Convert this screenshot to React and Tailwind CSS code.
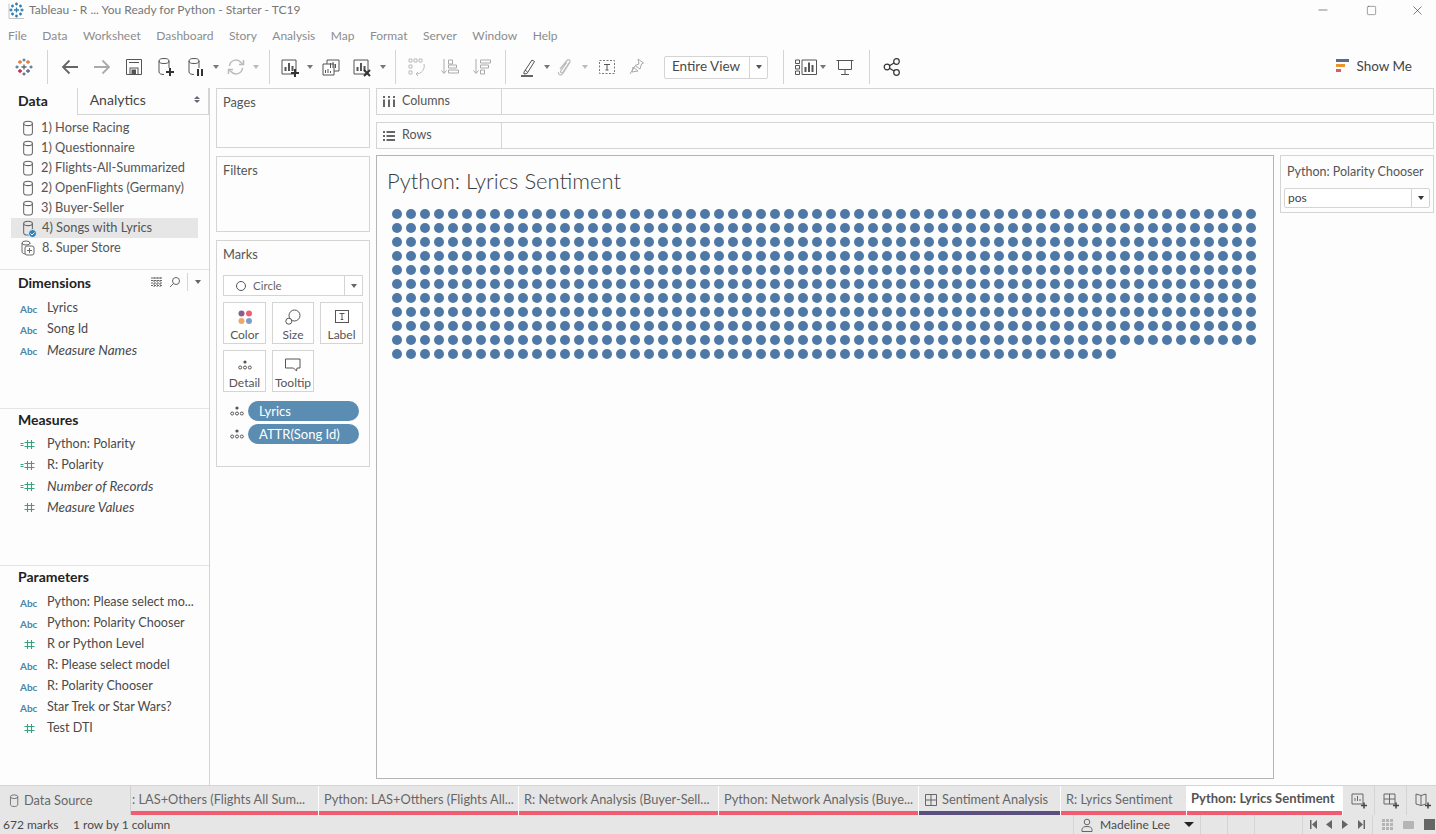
import React from 'react';
import { Minus, Square, X } from 'lucide-react';

const font = { fontFamily: 'Lato, sans-serif' };

function Svg({ children, w = 20, h = 20, className = 'text-[#555]', sw = 1.2 }) {
  return (
    <svg width={w} height={h} viewBox={`0 0 ${w} ${h}`} fill="none" stroke="currentColor" strokeWidth={sw} className={className}>
      {children}
    </svg>
  );
}

function Caret({ className = 'border-t-[#777]' }) {
  return <span className={`block w-0 h-0 border-l-[3.5px] border-r-[3.5px] border-t-[4px] border-l-transparent border-r-transparent shrink-0 ${className}`} />;
}

function Sep({ className = '' }) {
  return <div className={`w-px h-[34px] bg-[#d4d4d4] shrink-0 ${className}`} />;
}

function Slot({ className, children }) {
  return <div className={`h-[34px] flex items-center justify-center shrink-0 ${className}`}>{children}</div>;
}

function Cylinder({ className = 'text-[#666]', w = 14, h = 18 }) {
  return (
    <svg width={w} height={h} viewBox="0 0 14 18" fill="none" stroke="currentColor" strokeWidth="1.1" className={className}>
      <ellipse cx="6.5" cy="3.5" rx="4.7" ry="2.4" />
      <path d="M1.8 3.5v10c0 1.6 2 2.6 4.7 2.6s4.7-1 4.7-2.6v-10" />
    </svg>
  );
}

function TableauLogo() {
  const c = (x, y, col, s = 5) => (
    <path d={`M${x - s / 2} ${y}h${s}M${x} ${y - s / 2}v${s}`} stroke={col} strokeWidth="1.3" />
  );
  return (
    <svg width="18" height="18" viewBox="0 0 18 18" fill="none">
      {c(9, 9, '#666', 5)}
      {c(5, 4, '#e8762b', 4)}
      {c(13, 4, '#e8762b', 4)}
      {c(9, 2, '#5a7fa8', 3)}
      {c(2, 9, '#4e79a7', 3)}
      {c(16, 9, '#4e79a7', 3)}
      {c(5, 13, '#c72037', 4)}
      {c(13, 13, '#5b6591', 4)}
      {c(9, 16, '#5a6b91', 3)}
    </svg>
  );
}

function WindowLogo() {
  const c = (x, y, s = 4) => <path d={`M${x - s / 2} ${y}h${s}M${x} ${y - s / 2}v${s}`} stroke="#2f7fb5" strokeWidth="1.3" />;
  return (
    <svg width="17" height="17" viewBox="0 0 17 17" fill="none">
      <path d="M1 1.5v15h15" stroke="#c4c4c4" />
      {c(8.5, 8, 5)}
      {c(8.5, 2, 3)}
      {c(8.5, 14, 3)}
      {c(3, 8, 3)}
      {c(14, 8, 3)}
      {c(4.5, 4, 3)}
      {c(12.5, 4, 3)}
      {c(4.5, 12, 3)}
      {c(12.5, 12, 3)}
    </svg>
  );
}

function PlusBadge({ x, y }) {
  return <path d={`M${x - 4} ${y}h8M${x} ${y - 4}v8`} stroke="#333" strokeWidth="2" />;
}

function Toolbar() {
  return (
    <div className="h-[34px] flex items-center pl-[8px] shrink-0">
      <Slot className="w-[32px]"><TableauLogo /></Slot>
      <div className="w-[7px] shrink-0" />
      <Sep />
      <div className="w-[6px] shrink-0" />
      <Slot className="w-[32px]">
        <Svg><path d="M18 10H3M9.5 3.5 3 10l6.500 6.500" stroke="#666" strokeWidth="1.800" /></Svg>
      </Slot>
      <Slot className="w-[32px]">
        <Svg className="text-[#aaa]"><path d="M2 10h15M10.500 3.500 17 10l-6.500 6.500" strokeWidth="1.800" /></Svg>
      </Slot>
      <Slot className="w-[32px]">
        <Svg sw={1}>
          <path d="M2.500 2.500h15v15h-15zM5 5.500h10" />
          <rect x="6" y="11" width="8" height="6.500" />
          <rect x="8" y="13" width="3.500" height="4.500" fill="#555" />
        </Svg>
      </Slot>
      <Slot className="w-[32px]">
        <Svg sw={1}><ellipse cx="8" cy="4" rx="5" ry="2.500" /><path d="M3 4v11c0 1.500 2 2.500 5 2.500M13 4v7" /><PlusBadge x={14} y={15} /></Svg>
      </Slot>
      <Slot className="w-[28px]">
        <Svg sw={1}><ellipse cx="8" cy="4" rx="5" ry="2.500" /><path d="M3 4v11c0 1.500 2 2.500 5 2.500M13 4v7" /><path d="M12 12v7M16 12v7" stroke="#333" strokeWidth="2" /></Svg>
      </Slot>
      <Slot className="w-[12px]"><Caret /></Slot>
      <Slot className="w-[28px]">
        <Svg className="text-[#bbb]" sw={1.500}><path d="M3.500 9A6.500 6.500 0 0 1 15 5.500L17 7M16.500 11A6.500 6.500 0 0 1 5 14.500L3 13" /><path d="M17.500 3v4.500H13M2.500 17v-4.500H7" /></Svg>
      </Slot>
      <Slot className="w-[12px]"><Caret className="border-t-[#bbb]" /></Slot>
      <div className="w-[7px] shrink-0" />
      <Sep />
      <div className="w-[6px] shrink-0" />
      <Slot className="w-[28px]">
        <Svg sw={1}><path d="M2 3h14v14H2z" /><path d="M5.500 14V10M9 14V6M12.500 14V9" strokeWidth="2" /><PlusBadge x={15} y={16} /></Svg>
      </Slot>
      <Slot className="w-[12px]"><Caret /></Slot>
      <Slot className="w-[30px]">
        <Svg sw={1}><path d="M6 3h12v11H6z" fill="#fff" /><path d="M2 7h11v11H2z" fill="#fff" /><path d="M9.500 11V6M12 11V5M14.500 11V7M4.500 16v-3M7 16v-4M9.500 16v-2" /></Svg>
      </Slot>
      <Slot className="w-[32px]">
        <Svg sw={1}><path d="M2 3h14v14H2z" /><path d="M5.500 14V10M9 14V6M12.500 14V9" strokeWidth="2" /><path d="M12 13l6 6M18 13l-6 6" stroke="#333" strokeWidth="2" /></Svg>
      </Slot>
      <Slot className="w-[10px]"><Caret /></Slot>
      <div className="w-[7px] shrink-0" />
      <Sep />
      <div className="w-[6px] shrink-0" />
      <Slot className="w-[30px]">
        <Svg className="text-[#bbb]" sw={1}><path d="M2 2h3v3H2zM7 2h3v3H7zM12 2h3v3h-3zM2 8h3v3H2zM2 14h3v3H2z" /><path d="M17 7a8 8 0 0 1-8 10M9 17l2-2M9 17l2 2" /></Svg>
      </Slot>
      <div className="w-[2px] shrink-0" />
      <Slot className="w-[32px]">
        <Svg className="text-[#aaa]" sw={1}><path d="M4 2v14M1.500 13.500 4 16.500l2.500-3M8.500 3h4v4h-4zM8.500 8h8v3h-8zM8.500 13h10v3h-10z" /></Svg>
      </Slot>
      <Slot className="w-[32px]">
        <Svg className="text-[#aaa]" sw={1}><path d="M4 2v14M1.500 13.500 4 16.500l2.500-3M8.500 3h10v3h-10zM8.500 8h8v3h-8zM8.500 13h4v4h-4z" /></Svg>
      </Slot>
      <div className="w-[7px] shrink-0" />
      <Sep />
      <div className="w-[6px] shrink-0" />
      <Slot className="w-[32px]">
        <Svg sw={1}><path d="M6 15 14 3l2.500 1.500L9 16.500 6 17zM7 13l2.500 2" /><path d="M3 19h12" stroke="#555" strokeWidth="1.800" /></Svg>
      </Slot>
      <Slot className="w-[6px]"><Caret /></Slot>
      <Slot className="w-[30px]">
        <Svg className="text-[#bbb]"><path d="M5 12 12 3.500c1.500-1.800 4-.3 2.800 1.700L8 15c-1 1.500-3 .5-2.300-1l6-8.500" /><path d="M14.800 5.500 7.500 17c-1.500 2-5 .5-3.800-2" /></Svg>
      </Slot>
      <Slot className="w-[10px]"><Caret className="border-t-[#bbb]" /></Slot>
      <Slot className="w-[34px]">
        <Svg sw={1}>
          <rect x="2.500" y="3.500" width="15" height="13" strokeDasharray="2 1.500" stroke="#777" />
          <path d="M7 7.500h6M10 7.500v5.500M8.500 13h3" stroke="#555" />
        </Svg>
      </Slot>
      <Slot className="w-[26px]">
        <Svg className="text-[#aaa]" sw={1}><path d="M11 2l5.500 4-2 1-1.500 5-5-3.500 4-1.500zM8 9l-5 8" /><path d="M6 10l5 4-6 1z" /></Svg>
      </Slot>
      <div className="w-[14px] shrink-0" />
      <div className="w-[104px] h-[23px] border border-[#d4d4d4] rounded-[2px] flex items-center shrink-0 bg-white">
        <span className="flex-1 text-[13.500px] text-[#4a4a4a] pl-[7px] leading-none">Entire View</span>
        <div className="w-[18px] h-full border-l border-[#d4d4d4] flex items-center justify-center"><Caret className="border-t-[#555]" /></div>
      </div>
      <div className="w-[15px] shrink-0" />
      <Sep />
      <div className="w-[6px] shrink-0" />
      <Slot className="w-[32px]">
        <svg width="22" height="16" viewBox="0 0 22 16" fill="none" stroke="#555">
          <path d="M.5 1h4v3.500h-4zM.5 6.500h4V10h-4zM.5 12h4v3.500h-4zM7 1h14.500v14.500H7z" />
          <path d="M10.500 13V8M14 13V3.500M17.500 13V6" strokeWidth="2" />
        </svg>
      </Slot>
      <Slot className="w-[2px]"><Caret /></Slot>
      <Slot className="w-[42px]">
        <Svg sw={1}><path d="M1.500 3.500h17M3.500 3.500v9h13v-9M10 12.500V17M6 17.500h8" /></Svg>
      </Slot>
      <div className="w-[3px] shrink-0" />
      <Sep />
      <div className="w-[6px] shrink-0" />
      <Slot className="w-[32px]">
        <Svg sw={1.200} className="text-[#333]"><circle cx="5" cy="10" r="2.800" /><circle cx="14.500" cy="4.500" r="2.800" /><circle cx="14.500" cy="15.500" r="2.800" /><path d="M7.500 8.700l4.500-2.800M7.500 11.300l4.500 2.800" /></Svg>
      </Slot>
      <div className="flex-1" />
      <div className="flex items-center gap-[6px] pr-[24px] pb-[2px] shrink-0">
        <svg width="14" height="16" viewBox="0 0 14 16">
          <rect x="0" y="1" width="13" height="3" fill="#5a6b91" />
          <rect x="0" y="6" width="9" height="3" fill="#e8962b" />
          <rect x="0" y="11" width="5" height="3" fill="#e0586c" />
        </svg>
        <span className="text-[13.500px] text-[#444]">Show Me</span>
      </div>
    </div>
  );
}

function DataIcon({ type }) {
  if (type === 'abc') return <span className="text-[10px] font-bold text-[#4a86a8] leading-none w-[17px] text-center">Abc</span>;
  return (
    <svg width="17" height="11" viewBox="0 0 17 11" fill="none" stroke="#37a27f" strokeWidth="1.100">
      {type === 'calc' && <path d="M.500 4.500h3M.500 6.500h3" />}
      <path d="M7.500 1v9M11.500 1v9M4.500 3.500h10M4.500 7.500h10" />
    </svg>
  );
}

function FieldList({ items }) {
  return (
    <div className="flex flex-col">
      {items.map(([type, name, italic]) => (
        <div key={name} className="h-[21px] flex items-center pl-[20px] shrink-0">
          <DataIcon type={type} />
          <span className={`ml-[10px] text-[#4a4a4a] whitespace-nowrap ${italic ? 'italic text-[13.500px]' : 'text-[12.600px]'}`}>{name}</span>
        </div>
      ))}
    </div>
  );
}

const sources = ['1) Horse Racing', '1) Questionnaire', '2) Flights-All-Summarized', '2) OpenFlights (Germany)', '3) Buyer-Seller', '4) Songs with Lyrics', '8. Super Store'];

function Sidebar() {
  return (
    <div className="w-[210px] shrink-0 border-r border-[#d4d4d4] flex flex-col">
      <div className="h-[27px] flex shrink-0">
        <div className="w-[77px] pl-[18px] pb-[3px] flex items-center text-[14px] font-bold text-[#222]">Data</div>
        <div className="w-[133px] border-l border-b border-r border-[#d4d4d4] pl-[12px] pr-[8px] pb-[3px] flex items-center justify-between text-[14px] text-[#444]">
          Analytics
          <span className="flex flex-col gap-px">
            <span className="block w-0 h-0 border-l-[3px] border-r-[3px] border-b-[3px] border-l-transparent border-r-transparent border-b-[#667]" />
            <span className="block w-0 h-0 border-l-[3px] border-r-[3px] border-t-[3px] border-l-transparent border-r-transparent border-t-[#667]" />
          </span>
        </div>
      </div>
      <div className="h-[155px] border-b border-[#e5e5e5] pt-[3px] pl-[11px] pr-[11px] shrink-0">
        {sources.map((s, i) => (
          <div key={s} className={`h-[20px] flex items-center pl-[11px] ${i === 5 ? 'bg-[#e6e6e6]' : ''}`}>
            <div className="relative w-[19px] shrink-0">
              {i === 6 ? (
                <svg width="16" height="16" viewBox="0 0 16 16" fill="none" stroke="#666" className="-ml-[2px]">
                  <ellipse cx="6" cy="3" rx="4" ry="2" />
                  <path d="M2 3v9c0 1 2 2 4 2M10 3v1" />
                  <rect x="5" y="6" width="9" height="9" rx="2" fill="#fdfdfd" />
                  <path d="M9.500 8v5M7 10.500h5" />
                </svg>
              ) : (
                <Cylinder w={13} h={17} />
              )}
              {i === 5 && (
                <svg width="9" height="9" viewBox="0 0 9 9" className="absolute left-[6px] top-[9px]">
                  <circle cx="4.500" cy="4.500" r="4" fill="#2f82b5" stroke="#fff" strokeWidth="0.800" />
                  <path d="M2.500 4.500l1.500 1.500 2.500-2.500" fill="none" stroke="#fff" strokeWidth="1" />
                </svg>
              )}
            </div>
            <span className={`text-[12.800px] text-[#555] whitespace-nowrap ${i >= 5 ? 'ml-[1px]' : ''}`}>{s}</span>
          </div>
        ))}
      </div>
      <div className="h-[139px] border-b border-[#e5e5e5] shrink-0">
        <div className="h-[26px] pb-[2px] flex items-center pl-[18px] pr-[8px] mb-[2px]">
          <span className="text-[14px] font-bold text-[#222] flex-1">Dimensions</span>
          <svg width="12" height="10" viewBox="0 0 12 10" stroke="#666" fill="none" className="mr-[6px]"><path d="M0 1h12M0 3.500h12M0 6h12M0 8.500h12M3 0v10M6 0v10M9 0v10" strokeDasharray="2 1" /></svg>
          <svg width="12" height="12" viewBox="0 0 12 12" stroke="#666" fill="none" className="mr-[6px]"><circle cx="7" cy="5" r="3.500" /><path d="M4.500 7.500 1 11" /></svg>
          <div className="w-px h-[18px] bg-[#d4d4d4] mr-[7px]" />
          <Caret className="border-t-[#666]" />
        </div>
        <FieldList items={[['abc', 'Lyrics'], ['abc', 'Song Id'], ['abc', 'Measure Names', true]]} />
      </div>
      <div className="h-[157px] border-b border-[#e5e5e5] shrink-0">
        <div className="h-[25px] pb-[5px] flex items-center pl-[18px] text-[14px] font-bold text-[#222]">Measures</div>
        <FieldList items={[['calc', 'Python: Polarity'], ['calc', 'R: Polarity'], ['calc', 'Number of Records', true], ['num', 'Measure Values', true]]} />
      </div>
      <div>
        <div className="h-[26px] pb-[5px] flex items-center pl-[18px] text-[14px] font-bold text-[#222]">Parameters</div>
        <FieldList items={[['abc', 'Python: Please select mo...'], ['abc', 'Python: Polarity Chooser'], ['num', 'R or Python Level'], ['abc', 'R: Please select model'], ['abc', 'R: Polarity Chooser'], ['abc', 'Star Trek or Star Wars?'], ['num', 'Test DTI']]} />
      </div>
    </div>
  );
}

function MarkButton({ label, children }) {
  return (
    <div className="h-[42px] border border-[#d4d4d4] flex flex-col items-center bg-white">
      <div className="h-[24px] flex items-center justify-center pt-[3px]">{children}</div>
      <span className="text-[12px] text-[#555] leading-[15px]">{label}</span>
    </div>
  );
}

function Detail3({ className = '' }) {
  return (
    <svg width="14" height="10" viewBox="0 0 14 10" fill="none" stroke="#555" className={className}>
      <circle cx="7" cy="2" r="1.600" fill="#555" stroke="none" />
      <circle cx="2.200" cy="7.500" r="1.500" />
      <circle cx="7" cy="7.500" r="1.500" />
      <circle cx="11.800" cy="7.500" r="1.500" />
    </svg>
  );
}

function Pill({ label }) {
  return (
    <div className="flex items-center h-[20px] mb-[3px]">
      <Detail3 className="mr-[4px] ml-[7px]" />
      <div className="w-[111px] h-[20px] rounded-[10px] bg-[#5b8db2] text-white text-[13px] pl-[11px] leading-[20px] whitespace-nowrap">{label}</div>
    </div>
  );
}

function Cards() {
  return (
    <div className="w-[154px] ml-[6px] shrink-0 flex flex-col gap-[8px]">
      <div className="h-[60px] border border-[#d4d4d4] px-[6px] pt-[4px] text-[12.800px] text-[#555]">Pages</div>
      <div className="h-[76px] border border-[#d4d4d4] px-[6px] pt-[4px] text-[12.800px] text-[#555]">Filters</div>
      <div className="h-[227px] border border-[#d4d4d4] px-[6px] pt-[4px]">
        <div className="text-[12.800px] text-[#555] h-[30px]">Marks</div>
        <div className="h-[21px] border border-[#d4d4d4] flex items-center mb-[6px] bg-white">
          <div className="w-[10px] h-[10px] rounded-full border border-[#555] ml-[12px] mr-[7px]" />
          <span className="flex-1 text-[11.500px] text-[#666]">Circle</span>
          <div className="w-[18px] h-full border-l border-[#d4d4d4] flex items-center justify-center"><Caret className="border-t-[#666]" /></div>
        </div>
        <div className="grid grid-cols-[43px_42px_43px] gap-x-[6px] gap-y-[6px] w-[140px]">
          <MarkButton label="Color">
            <svg width="14" height="14" viewBox="0 0 14 14">
              <circle cx="3.500" cy="3.500" r="3" fill="#8a5d8a" />
              <circle cx="11" cy="3.500" r="3" fill="#f0606f" />
              <circle cx="3.500" cy="11" r="3" fill="#eda767" />
              <circle cx="11" cy="11" r="3" fill="#7d9fc4" />
            </svg>
          </MarkButton>
          <MarkButton label="Size">
            <svg width="16" height="16" viewBox="0 0 16 16" fill="#fff" stroke="#555">
              <circle cx="9.500" cy="6.500" r="5.500" />
              <circle cx="3.800" cy="12.200" r="3" />
            </svg>
          </MarkButton>
          <MarkButton label="Label">
            <svg width="14" height="13" viewBox="0 0 14 13" fill="none" stroke="#555">
              <rect x=".5" y=".5" width="13" height="12" />
              <path d="M4.500 3.500h5M7 3.500v6M5.700 9.500h2.600" />
            </svg>
          </MarkButton>
          <MarkButton label="Detail"><Detail3 /></MarkButton>
          <MarkButton label="Tooltip">
            <svg width="16" height="14" viewBox="0 0 16 14" fill="none" stroke="#555">
              <path d="M.5 1h14.500v9h-3l-.5 3-3-3H.5z" />
            </svg>
          </MarkButton>
        </div>
        <div className="mt-[9px]">
          <Pill label="Lyrics" />
          <Pill label="ATTR(Song Id)" />
        </div>
      </div>
    </div>
  );
}

function Shelf({ label, icon }) {
  return (
    <div className="h-[27px] border border-[#d4d4d4] flex shrink-0">
      <div className="w-[125px] border-r border-[#d4d4d4] flex items-center pl-[6px] gap-[7px]">
        {icon}
        <span className="text-[12.500px] text-[#555]">{label}</span>
      </div>
    </div>
  );
}

const dots = Array.from({ length: 672 }, (_, i) => i);

function View() {
  return (
    <div className="w-[898px] h-[624px] border border-[#b4b4b4] pl-[10px] pt-[10px] shrink-0 bg-[#fdfdfd]">
      <div className="h-[29px] text-[22px] font-light text-[#3c3c3c] leading-[29px]">Python: Lyrics Sentiment</div>
      <div className="grid grid-cols-[repeat(62,14px)] auto-rows-[14px] mt-[12px] ml-[3px]">
        {dots.map((d) => (
          <div key={d} className="w-[10px] h-[10px] rounded-full bg-[#4e79a7] m-[2px]" />
        ))}
      </div>
    </div>
  );
}

const tabs = [
  [': LAS+Others (Flights All Sum...', 'w-[188px]', 'pl-[1px]'],
  ['Python: LAS+Otthers (Flights All...', 'w-[200px]', 'pl-[5px]'],
  ['R: Network Analysis (Buyer-Sell...', 'w-[200px]', 'pl-[5px]'],
  ['Python: Network Analysis (Buye...', 'w-[200px]', 'pl-[5px]'],
];

function Tab({ width, pad, line = 'bg-[#f25c70]', children }) {
  return (
    <div className={`${width} h-full border-r border-[#fdfdfd] flex flex-col shrink-0`}>
      <div className={`flex-1 flex items-center pt-[3px] ${pad} text-[12.800px] text-[#666] whitespace-nowrap overflow-hidden`}>{children}</div>
      <div className={`h-[4px] ${line}`} />
    </div>
  );
}

function TabBar() {
  return (
    <div className="h-[30px] border-t border-[#d4d4d4] bg-[#e6e6e6] flex shrink-0">
      <div className="w-[131px] h-full border-r border-[#cfcfcf] flex items-center pl-[9px] gap-[4px] shrink-0">
        <Cylinder w={11} h={14} />
        <span className="text-[12.800px] text-[#666]">Data Source</span>
      </div>
      {tabs.map(([name, w, p]) => (
        <Tab key={name} width={w} pad={p}>{name}</Tab>
      ))}
      <Tab width="w-[142px]" pad="pl-[6px]" line="bg-[#5b4f7f]">
        <svg width="12" height="12" viewBox="0 0 12 12" fill="none" stroke="#666" className="mr-[5px]"><path d="M.5.500h11v11H.500zM.5 6h11M6 .5v11" /></svg>
        Sentiment Analysis
      </Tab>
      <Tab width="w-[126px]" pad="pl-[5px]">R: Lyrics Sentiment</Tab>
      <div className="w-[156px] h-full flex flex-col shrink-0 bg-white border-r border-[#fdfdfd]">
        <div className="flex-1 flex items-center pl-[4px] text-[13px] font-bold text-[#555] whitespace-nowrap">Python: Lyrics Sentiment</div>
        <div className="h-[4px] bg-[#f25c70]" />
      </div>
      <div className="w-[32px] h-full border-r border-[#d4d4d4] flex items-center justify-center shrink-0">
        <svg width="18" height="18" viewBox="0 0 18 18" fill="none" stroke="#666"><path d="M2 2h11v10H2z" /><path d="M5 9V6M7.500 9V4M10 9V7" /><path d="M11 13.500h6M14 10.500v6" stroke="#444" strokeWidth="1.500" /></svg>
      </div>
      <div className="w-[32px] h-full border-r border-[#d4d4d4] flex items-center justify-center shrink-0">
        <svg width="18" height="18" viewBox="0 0 18 18" fill="none" stroke="#666"><path d="M2 2h11v10H2zM2 7h11M7.500 2v10" /><path d="M11 13.500h6M14 10.500v6" stroke="#444" strokeWidth="1.500" /></svg>
      </div>
      <div className="flex-1 h-full flex items-center justify-center pl-[3px]">
        <svg width="18" height="18" viewBox="0 0 18 18" fill="none" stroke="#666"><path d="M2 2l5 1.500 5-1.500v10l-5 1.500L2 12zM7 3.500v10" /><path d="M11 13.500h6M14 10.500v6" stroke="#444" strokeWidth="1.500" /></svg>
      </div>
    </div>
  );
}

function StatusBar() {
  return (
    <div className="h-[19px] bg-[#e6e6e6] flex items-center text-[12px] text-[#4a4a4a] shrink-0">
      <span className="pl-[3px] w-[73px] shrink-0">672 marks</span>
      <span className="w-[1000px] shrink-0">1 row by 1 column</span>
      <div className="w-[127px] h-full border-l border-[#d4d4d4] flex items-center pl-[6px] gap-[6px] shrink-0">
        <svg width="14" height="14" viewBox="0 0 14 14" fill="none" stroke="#666"><circle cx="7" cy="4" r="2.800" /><path d="M2 13.500v-2c0-2 2-3 5-3s5 1 5 3v2z" /></svg>
        <span className="flex-1">Madeline Lee</span>
        <Caret className="border-t-[#222] border-l-[5px] border-r-[5px] border-t-[5px] mr-[6px]" />
      </div>
      <div className="w-[27px] h-full border-l border-[#d4d4d4] shrink-0" />
      <div className="w-[27px] h-full border-l border-[#d4d4d4] shrink-0" />
      <div className="w-[48px] h-full border-l border-[#d4d4d4] shrink-0" />
      <div className="w-[70px] h-full border-l border-[#d4d4d4] flex items-center pl-[2px] shrink-0">
        <div className="w-[16px] flex justify-center"><svg width="7" height="9" viewBox="0 0 7 9" fill="#666"><path d="M0 0h1.500v9H0zM7 0v9L2 4.500z" /></svg></div>
        <div className="w-[16px] flex justify-center"><svg width="6" height="9" viewBox="0 0 6 9" fill="#666"><path d="M6 0v9L0 4.500z" /></svg></div>
        <div className="w-[16px] flex justify-center"><svg width="6" height="9" viewBox="0 0 6 9" fill="#666"><path d="M0 0v9l6-4.500z" /></svg></div>
        <div className="w-[16px] flex justify-center"><svg width="7" height="9" viewBox="0 0 7 9" fill="#666"><path d="M0 0v9l5-4.500zM5.500 0H7v9H5.500z" /></svg></div>
      </div>
      <div className="flex-1 h-full border-l border-[#d4d4d4] flex items-center pl-[9px] gap-[10px]">
        <svg width="11" height="11" viewBox="0 0 11 11" fill="#b5b5b5"><path d="M0 0h3v3H0zM4 0h3v3H4zM8 0h3v3H8zM0 4h3v3H0zM4 4h3v3H4zM8 4h3v3H8zM0 8h3v3H0zM4 8h3v3H4zM8 8h3v3H8z" /></svg>
        <div className="w-[11px] h-[8px] rounded-[1px] bg-[#b5b5b5]" />
        <div className="w-[11px] h-[11px] bg-[#666]" />
      </div>
    </div>
  );
}

export default function App() {
  return (
    <div className="w-[1436px] h-[834px] bg-[#fdfdfd] flex flex-col overflow-hidden" style={font}>
      <div className="h-[22px] pb-[2px] flex items-center shrink-0 pl-[8px]">
        <WindowLogo />
        <span className="ml-[4px] text-[12px] text-[#777] whitespace-nowrap">Tableau - R ... You Ready for Python - Starter - TC19</span>
        <div className="flex-1" />
        <div className="w-[46px] flex justify-center mr-[2px]"><Minus size={14} strokeWidth={1} className="text-[#333]" /></div>
        <div className="w-[46px] flex justify-center mr-[4px]"><Square size={11} strokeWidth={1} className="text-[#333]" /></div>
        <div className="w-[38px] flex justify-center"><X size={15} strokeWidth={1} className="text-[#333]" /></div>
      </div>
      <div className="h-[28px] flex items-center gap-[15.500px] pl-[8px] text-[12px] text-[#8c8c8c] shrink-0">
        {['File', 'Data', 'Worksheet', 'Dashboard', 'Story', 'Analysis', 'Map', 'Format', 'Server', 'Window', 'Help'].map((m) => (
          <span key={m}>{m}</span>
        ))}
      </div>
      <Toolbar />
      <div className="h-[4px] shrink-0" />
      <div className="flex-1 flex min-h-0">
        <Sidebar />
        <Cards />
        <div className="flex-1 ml-[6px] mr-[2px] flex flex-col gap-[7px] min-w-0">
          <Shelf
            label="Columns"
            icon={<svg width="12" height="11" viewBox="0 0 12 11" fill="#666"><path d="M0 0h2v2H0zM5 0h2v2H5zM10 0h2v2h-2zM0 3.500h2V11H0zM5 3.500h2V11H5zM10 3.500h2V11h-2z" /></svg>}
          />
          <Shelf
            label="Rows"
            icon={<svg width="12" height="10" viewBox="0 0 12 10" fill="#666"><path d="M0 0h2v2H0zM0 4h2v2H0zM0 8h2v2H0zM3.500 0H12v2H3.500zM3.500 4H12v2H3.500zM3.500 8H12v2H3.500z" /></svg>}
          />
          <div className="flex gap-[6px] -mt-px">
            <View />
            <div className="w-[154px] h-[58px] border border-[#d4d4d4] px-[3px] shrink-0">
              <div className="h-[32px] pl-[3px] flex items-center text-[12.500px] text-[#555] whitespace-nowrap">Python: Polarity Chooser</div>
              <div className="h-[20px] w-[146px] border border-[#d4d4d4] rounded-[2px] flex items-center bg-white">
                <span className="flex-1 pl-[3px] text-[12px] text-[#444]">pos</span>
                <div className="w-[18px] h-full border-l border-[#d4d4d4] flex items-center justify-center"><Caret className="border-t-[#333]" /></div>
              </div>
            </div>
          </div>
        </div>
      </div>
      <TabBar />
      <StatusBar />
    </div>
  );
}
